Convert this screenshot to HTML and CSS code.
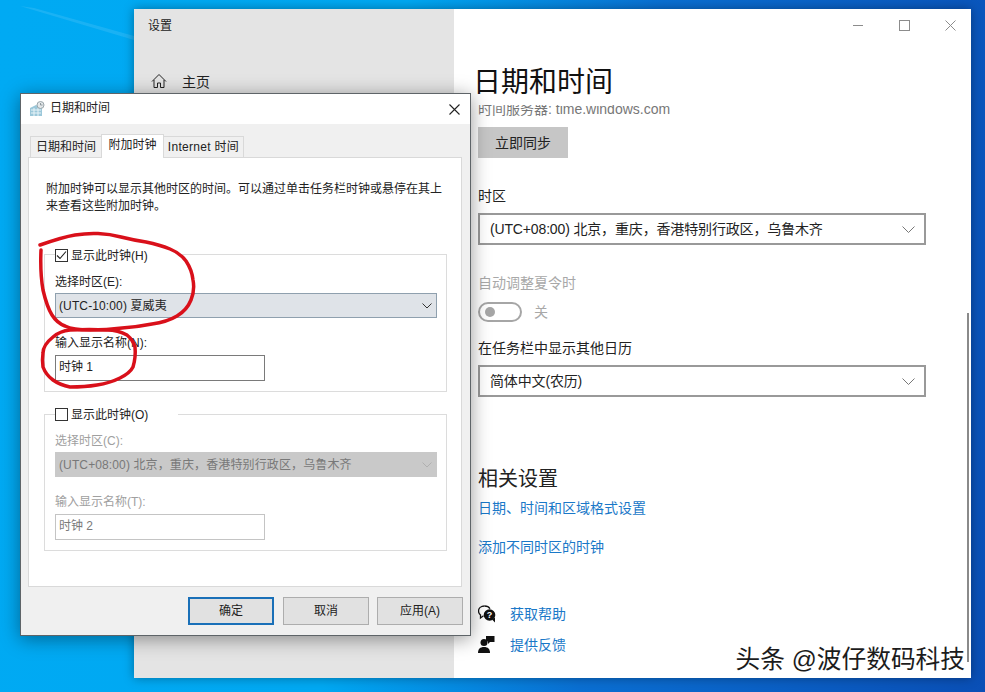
FILE: index.html
```html
<!DOCTYPE html>
<html lang="zh">
<head>
<meta charset="utf-8">
<title>日期和时间</title>
<link rel="stylesheet" href="styles.css">
</head>
<body>
<div class="desktop">
  <svg class="ray" width="134" height="60" viewBox="0 0 134 60"><polygon points="20,6 34,8 134,36 134,40" fill="#fff" opacity=".1"/></svg>

  <section class="settings">
    <aside class="side">
      <div class="side-title">设置</div>
      <div class="side-home">
        <svg width="16" height="16" viewBox="0 0 16 16" fill="none" stroke="#222" stroke-width="1"><path d="M1 8.500 8 1.500l7 7M3 7v7.500h3.500V10h3v4.500H13V7"/></svg>
        <span>主页</span>
      </div>
    </aside>
    <main class="content">
      <div class="winctl">
        <svg width="11" height="11" viewBox="0 0 11 11" fill="none" stroke="#8c8c8c"><path d="M0 5.500h10"/></svg>
        <svg width="11" height="11" viewBox="0 0 11 11" fill="none" stroke="#8c8c8c"><rect x=".5" y=".5" width="10" height="10"/></svg>
        <svg width="11" height="11" viewBox="0 0 11 11" fill="none" stroke="#8c8c8c"><path d="M.5.500l10 10M10.500.500l-10 10"/></svg>
      </div>
      <h1 class="page-title">日期和时间</h1>
      <div class="server"><span>时间服务器: time.windows.com</span></div>
      <button class="sync">立即同步</button>
      <div class="lbl lbl-tz">时区</div>
      <div class="combo">
        <span>(UTC+08:00) 北京，重庆，香港特别行政区，乌鲁木齐</span>
        <svg width="13" height="7" viewBox="0 0 13 7" fill="none" stroke="#777"><path d="M.5.500l6 6 6-6"/></svg>
      </div>
      <div class="lbl lbl-dst muted">自动调整夏令时</div>
      <div class="toggle-row">
        <span class="toggle"><i></i></span>
        <span class="muted">关</span>
      </div>
      <div class="lbl lbl-cal">在任务栏中显示其他日历</div>
      <div class="combo">
        <span>简体中文(农历)</span>
        <svg width="13" height="7" viewBox="0 0 13 7" fill="none" stroke="#777"><path d="M.5.500l6 6 6-6"/></svg>
      </div>
      <h2 class="related">相关设置</h2>
      <a class="link link-a">日期、时间和区域格式设置</a>
      <a class="link link-b">添加不同时区的时钟</a>
      <div class="help-row help-a">
        <svg width="18" height="18" viewBox="0 0 18 18"><path d="M6.500 1C3 1 .5 3.200.5 6c0 1.600.8 3 2 3.900V13l3-2.200" fill="none" stroke="#111" stroke-width="1.300"/><path d="M6.500 1c2.500 0 4.500 1 5.500 2.800" fill="none" stroke="#111" stroke-width="1.300"/><circle cx="11.500" cy="10" r="5.800" fill="#111"/><path d="M14 14.500l3 3v-5z" fill="#111"/><text x="11.500" y="13" class="qmark">?</text></svg>
        <a class="link">获取帮助</a>
      </div>
      <div class="help-row help-b">
        <svg width="18" height="18" viewBox="0 0 18 18" fill="#111"><circle cx="6" cy="6.500" r="3.500"/><path d="M0 17c0-4 2-6 6-6s6 2 6 6z"/><path d="M8 0h8.500v6H12l-2 2V5.500H8z"/></svg>
        <a class="link">提供反馈</a>
      </div>
      <div class="scrollbar"></div>
      <div class="watermark">头条 @波仔数码科技</div>
    </main>
  </section>

  <section class="dialog">
    <header class="dlg-head">
      <svg width="16" height="16" viewBox="0 0 16 16"><path d="M1 7l6-3 6 3v8H1z" fill="#9cc8da"/><path d="M2 9h10M2 12h10M5 7v8M9 7v8" stroke="#e8f4f8"/><circle cx="11.500" cy="4" r="3.500" fill="#e4e8ea" stroke="#9aa5aa"/><path d="M11.500 2v2h2" fill="none" stroke="#7a858a" stroke-width=".8"/></svg>
      <span class="dlg-title">日期和时间</span>
      <svg class="dlg-x" width="11" height="11" viewBox="0 0 11 11" fill="none" stroke="#222" stroke-width="1.100"><path d="M.5.500l10 10M10.500.500l-10 10"/></svg>
    </header>
    <div class="dlg-body">
      <nav class="tabs">
        <span class="tab tab-1">日期和时间</span>
        <span class="tab tab-on">附加时钟</span>
        <span class="tab tab-3">Internet 时间</span>
      </nav>
      <div class="panel">
        <p class="desc">附加时钟可以显示其他时区的时间。可以通过单击任务栏时钟或悬停在其上来查看这些附加时钟。</p>

        <div class="group group-1">
          <label class="legend"><span class="check"><svg width="11" height="11" viewBox="0 0 11 11" fill="none" stroke="#222" stroke-width="1.100"><path d="M1 5.500l3 3 6-7"/></svg></span>显示此时钟(H)</label>
          <div class="g-label g-first">选择时区(E):</div>
          <div class="g-select">
            <span>(UTC-10:00) 夏威夷</span>
            <svg width="10" height="6" viewBox="0 0 10 6" fill="none" stroke="#333"><path d="M.5.500l4.500 4.500 4.500-4.500"/></svg>
          </div>
          <div class="g-label g-second">输入显示名称(N):</div>
          <div class="g-input">时钟 1</div>
        </div>

        <div class="group group-2">
          <label class="legend"><span class="check"></span>显示此时钟(O)</label>
          <div class="g-label g-first off">选择时区(C):</div>
          <div class="g-select off">
            <span>(UTC+08:00) 北京，重庆，香港特别行政区，乌鲁木齐</span>
            <svg width="10" height="6" viewBox="0 0 10 6" fill="none" stroke="#b0b0b0"><path d="M.5.500l4.500 4.500 4.500-4.500"/></svg>
          </div>
          <div class="g-label g-second off">输入显示名称(T):</div>
          <div class="g-input off">时钟 2</div>
        </div>
      </div>
      <footer class="dlg-foot">
        <button class="btn btn-ok">确定</button>
        <button class="btn">取消</button>
        <button class="btn">应用(A)</button>
      </footer>
    </div>
  </section>

  <svg class="marks" width="985" height="692" viewBox="0 0 985 692" fill="none" stroke="#d9101a" stroke-width="3.500" stroke-linecap="round" stroke-linejoin="round">
    <path d="M40 245Q63 237 75 235Q87 233 98 233.500Q110 234 121 237Q133 240 146 242Q160 245 170 249Q180 253 186 261Q192 270 193 280Q195 290 191 300Q187 310 177 316Q167 322 152 324Q137 327 122 328Q107 330 90 330Q73 330 65 326Q57 323 52 315Q47 307 43 290Q40 273 41 250"/>
    <path d="M53 337Q43 345 43 353Q42 360 43 367Q46 375 53 380Q60 385 70 387Q85 387 97 385Q110 383 120 378Q130 373 133 367Q136 357 135 347Q133 340 127 335Q118 330 107 330Q90 329 70 330Q60 331 53 337"/>
  </svg>
</div>
</body>
</html>
```
FILE: styles.css
```css
* { box-sizing: border-box; }
html, body { margin: 0; padding: 0; }
body { font-family: "Liberation Sans", "Noto Sans CJK SC", sans-serif; color: #111; }
button { font: inherit; color: inherit; padding: 0; }
h1, h2, p { margin: 0; font-weight: 400; }

.desktop {
  position: relative;
  width: 985px;
  height: 692px;
  overflow: hidden;
  background: linear-gradient(97deg, #00aaf3 0%, #00a8f2 38%, #0a6fd2 62%, #0a4fb6 100%);
}
.ray { position: absolute; left: 0; top: 0; }
.marks { position: absolute; left: 0; top: 0; pointer-events: none; }

/* Settings window */
.settings {
  position: absolute;
  left: 134px;
  top: 9px;
  width: 837px;
  height: 669px;
  display: flex;
  box-shadow: 0 0 10px rgba(0, 0, 0, .35);
}
.side { width: 320px; background: #e4e4e4; padding: 9px 0 0 14px; font-size: 12px; }
.side-title { height: 17px; line-height: 17px; color: #222; }
.side-home { display: flex; align-items: center; gap: 15px; margin: 36px 0 0 3px; font-size: 14px; height: 20px; color: #222; }
.content { position: relative; flex: 1; background: #fff; padding: 0 0 0 24px; font-size: 14px; line-height: 20px; }
.winctl { display: flex; justify-content: flex-end; gap: 35px; height: 52px; padding: 11px 15px 0 0; margin-left: -24px; }
.page-title { font-size: 28px; line-height: 40px; margin: 2px 0 0 -5px; color: #111; }
.server { height: 12px; margin-top: 2px; overflow: hidden; color: #777; font-size: 14px; }
.server span { display: block; margin-top: -6px; line-height: 20px; }
.sync { display: block; width: 90px; height: 31px; margin-top: 10px; background: #c6c6c6; border: 0; font-size: 14px; color: #222; }
.lbl { color: #222; }
.lbl-tz { margin-top: 28px; }
.lbl-dst { margin-top: 28px; }
.lbl-cal { margin-top: 16px; }
.muted { color: #a8a8a8; }
.combo {
  display: flex;
  justify-content: space-between;
  align-items: center;
  width: 448px;
  height: 32px;
  margin-top: 7px;
  padding: 0 9px 0 10px;
  border: 2px solid #999;
  color: #222;
  letter-spacing: -.15px;
}
.toggle-row { display: flex; align-items: center; gap: 12px; margin-top: 9px; height: 20px; }
.toggle { display: flex; align-items: center; width: 44px; height: 20px; padding-left: 5px; border: 2px solid #a6a6a6; border-radius: 10px; }
.toggle i { width: 10px; height: 10px; border-radius: 50%; background: #a6a6a6; }
.related { font-size: 20px; line-height: 28px; margin-top: 68px; color: #222; }
.link { display: block; color: #1a78c8; }
.link-a { margin-top: 5px; }
.link-b { margin-top: 19px; }
.help-row { display: flex; align-items: center; gap: 14px; height: 20px; }
.help-a { margin-top: 47px; }
.help-b { margin-top: 11px; }
.qmark { font: 700 9px "Liberation Sans", sans-serif; fill: #fff; text-anchor: middle; }
.scrollbar { position: absolute; right: 2px; top: 304px; bottom: 16px; width: 2px; background: #8a8a8a; }
.watermark {
  position: absolute;
  right: 6px;
  bottom: 2px;
  font-size: 24.700px;
  line-height: 32px;
  color: #1c1c1c;
  white-space: nowrap;
  text-shadow: 1px 1px 0 #fff;
}

/* Date and time dialog */
.dialog {
  position: absolute;
  left: 20px;
  top: 93px;
  width: 451px;
  height: 543px;
  display: flex;
  flex-direction: column;
  background: #f0f0f0;
  border: 1px solid #5e6468;
  box-shadow: 0 3px 18px rgba(0, 0, 0, .4);
  font-size: 12px;
  line-height: 17px;
  color: #222;
}
.dlg-head { position: relative; display: flex; align-items: center; gap: 5px; height: 30px; padding: 0 0 1px 8px; background: #fff; flex: none; }
.dlg-title { font-size: 12px; }
.dlg-x { position: absolute; right: 10px; top: 10px; }
.dlg-body { flex: 1; display: flex; flex-direction: column; }
.tabs { display: flex; align-items: flex-end; height: 33px; padding-left: 9px; flex: none; }
.tab { display: flex; align-items: center; justify-content: center; height: 21px; background: #f0f0f0; border: 1px solid #d9d9d9; border-bottom: 0; }
.tab-1 { width: 71px; border-right: 0; }
.tab-on { width: 63px; height: 24px; padding-bottom: 3px; background: #fff; margin-bottom: -1px; position: relative; z-index: 1; border-bottom: 0; }
.tab-3 { width: 80px; border-left: 0; letter-spacing: .3px; }
.panel { height: 430px; margin: 0 8px 0 7px; padding: 23px 14px 0 15px; background: #fff; border: 1px solid #d9d9d9; flex: none; }
.desc { margin: 0 2px; }
.group { position: relative; width: 403px; padding: 0 10px; border: 1px solid #dcdcdc; }
.group-1 { height: 138px; margin-top: 39px; }
.group-2 { height: 137px; margin-top: 22px; }
.legend { display: flex; align-items: center; width: 123px; height: 17px; padding-top: 2px; background: #fff; }
.group-1 .legend { margin-top: -8px; }
.group-2 .legend { margin-top: -9px; }
.check { display: flex; align-items: center; justify-content: center; width: 13px; height: 13px; margin: -2px 3px 0 0; border: 1px solid #333; }
.g-label { height: 17px; line-height: 21px; }
.g-first { margin-top: 8px; }
.g-second { margin-top: 15px; }
.g-label.off { color: #a0a0a0; }
.g-select {
  display: flex;
  justify-content: space-between;
  align-items: center;
  width: 382px;
  height: 25px;
  margin-top: 4px;
  padding: 2px 4px 0 3px;
  background: #dfe3e8;
  border: 1px solid #8fa0ae;
  letter-spacing: .12px;
}
.g-select svg { margin-top: -2px; }
.g-select.off { background: #c9c9c9; border-color: #c9c9c9; color: #787878; }
.g-input {
  display: flex;
  align-items: center;
  width: 210px;
  height: 26px;
  margin-top: 5px;
  padding: 0 0 2px 3px;
  background: #fff;
  border: 1px solid #7a7a7a;
}
.g-input.off { border-color: #c4c4c4; color: #7a7a7a; }
.dlg-foot { display: flex; justify-content: flex-end; gap: 8px; padding: 10px 7px 0 0; }
.btn { width: 86px; height: 28px; background: #e1e1e1; border: 1px solid #adadad; font-size: 12px; }
.btn-ok { border: 2px solid #1a70b8; margin-right: 1px; }
```
